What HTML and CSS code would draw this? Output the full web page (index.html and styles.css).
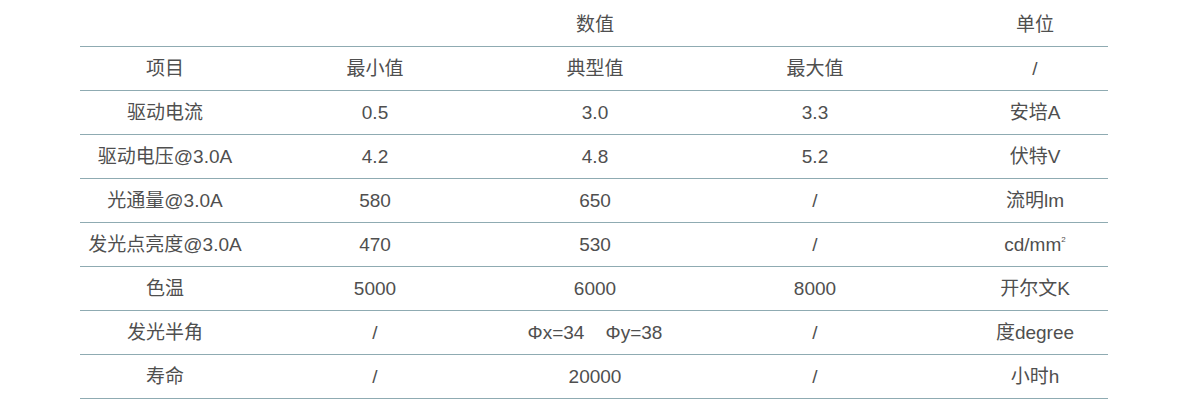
FILE: index.html
```html
<!DOCTYPE html>
<html lang="zh">
<head>
<meta charset="utf-8">
<link rel="stylesheet" href="styles.css">
</head>
<body>
<table class="spec">
  <colgroup>
    <col class="c1"><col class="c2"><col class="c3"><col class="c4"><col class="c5">
  </colgroup>
  <thead>
    <tr class="head">
      <th></th>
      <th colspan="3">数值</th>
      <th class="unit">单位</th>
    </tr>
  </thead>
  <tbody>
    <tr><td>项目</td><td>最小值</td><td>典型值</td><td>最大值</td><td class="unit">/</td></tr>
    <tr><td>驱动电流</td><td>0.5</td><td>3.0</td><td>3.3</td><td class="unit">安培A</td></tr>
    <tr><td>驱动电压@3.0A</td><td>4.2</td><td>4.8</td><td>5.2</td><td class="unit">伏特V</td></tr>
    <tr><td>光通量@3.0A</td><td>580</td><td>650</td><td>/</td><td class="unit">流明lm</td></tr>
    <tr><td>发光点亮度@3.0A</td><td>470</td><td>530</td><td>/</td><td class="unit">cd/mm<sup>2</sup></td></tr>
    <tr><td>色温</td><td>5000</td><td>6000</td><td>8000</td><td class="unit">开尔文K</td></tr>
    <tr><td>发光半角</td><td>/</td><td>Φx=34&nbsp;&nbsp;&nbsp;&nbsp;Φy=38</td><td>/</td><td class="unit">度degree</td></tr>
    <tr><td>寿命</td><td>/</td><td>20000</td><td>/</td><td class="unit">小时h</td></tr>
  </tbody>
</table>
</body>
</html>
```

FILE: styles.css
```css
html, body {
  margin: 0;
  padding: 0;
  background: #ffffff;
}

.spec {
  margin-left: 80px;
  width: 1028px;
  border-collapse: collapse;
  table-layout: fixed;
  font-family: "Liberation Sans", "Noto Sans CJK SC", sans-serif;
  font-size: 19px;
  color: #4f4f4f;
}

.c1 { width: 170px; }
.c2 { width: 250px; }
.c3 { width: 190px; }
.c4 { width: 250px; }
.c5 { width: 168px; }

.spec th,
.spec td {
  box-sizing: border-box;
  padding: 0;
  text-align: center;
  font-weight: normal;
  line-height: 20px;
  border-bottom: 1px solid #8fabb2;
  white-space: nowrap;
  vertical-align: middle;
}

.head th {
  height: 46px;
  padding-top: 4px;
}

.spec tbody td {
  height: 44px;
  padding-top: 1px;
}

.spec .unit {
  padding-left: 22px;
}

.spec sup {
  font-size: 8px;
  line-height: 0;
  vertical-align: 9px;
}
```
